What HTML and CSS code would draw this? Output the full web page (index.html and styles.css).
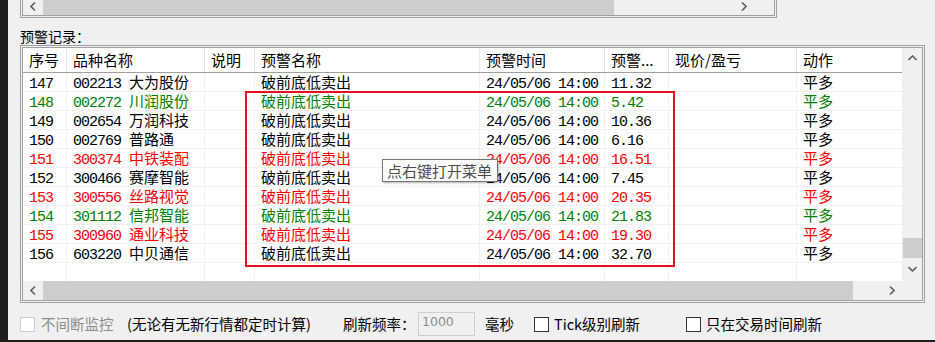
FILE: index.html
```html
<!DOCTYPE html>
<html lang="zh-CN">
<head>
<meta charset="utf-8">
<title>预警记录</title>
<link rel="stylesheet" href="styles.css">
</head>
<body>
<div class="window">
  <div class="topbox">
    <div class="hscroll top-h">
      <div class="sb-btn"><svg width="6" height="9" viewBox="0 0 6 9"><polyline points="5,0.5 1,4.5 5,8.5" class="chev"/></svg></div>
      <div class="thumb-h top-thumb"></div>
      <div class="sb-fill"></div>
      <div class="sb-btn"><svg width="6" height="9" viewBox="0 0 6 9"><polyline points="1,0.5 5,4.5 1,8.5" class="chev"/></svg></div>
    </div>
    <div class="corner"></div>
  </div>

  <div class="section-label">预警记录：</div>

  <div class="listbox">
    <div class="list">
      <div class="hdr">
        <div class="h c1">序号</div>
        <div class="h c2">品种名称</div>
        <div class="h c3">说明</div>
        <div class="h c4">预警名称</div>
        <div class="h c5">预警时间</div>
        <div class="h c6">预警...</div>
        <div class="h c7">现价/盈亏</div>
        <div class="h c8">动作</div>
      </div>

      <div class="row">
        <div class="c c1"><span class="n">147</span></div>
        <div class="c c2"><span class="n">002213 </span>大为股份</div>
        <div class="c c3"></div>
        <div class="c c4">破前底低卖出</div>
        <div class="c c5"><span class="n">24/05/06 14:00</span></div>
        <div class="c c6"><span class="n">11.32</span></div>
        <div class="c c7"></div>
        <div class="c c8">平多</div>
      </div>
      <div class="row green">
        <div class="c c1"><span class="n">148</span></div>
        <div class="c c2"><span class="n">002272 </span>川润股份</div>
        <div class="c c3"></div>
        <div class="c c4">破前底低卖出</div>
        <div class="c c5"><span class="n">24/05/06 14:00</span></div>
        <div class="c c6"><span class="n">5.42</span></div>
        <div class="c c7"></div>
        <div class="c c8">平多</div>
      </div>
      <div class="row">
        <div class="c c1"><span class="n">149</span></div>
        <div class="c c2"><span class="n">002654 </span>万润科技</div>
        <div class="c c3"></div>
        <div class="c c4">破前底低卖出</div>
        <div class="c c5"><span class="n">24/05/06 14:00</span></div>
        <div class="c c6"><span class="n">10.36</span></div>
        <div class="c c7"></div>
        <div class="c c8">平多</div>
      </div>
      <div class="row">
        <div class="c c1"><span class="n">150</span></div>
        <div class="c c2"><span class="n">002769 </span>普路通</div>
        <div class="c c3"></div>
        <div class="c c4">破前底低卖出</div>
        <div class="c c5"><span class="n">24/05/06 14:00</span></div>
        <div class="c c6"><span class="n">6.16</span></div>
        <div class="c c7"></div>
        <div class="c c8">平多</div>
      </div>
      <div class="row red">
        <div class="c c1"><span class="n">151</span></div>
        <div class="c c2"><span class="n">300374 </span>中铁装配</div>
        <div class="c c3"></div>
        <div class="c c4">破前底低卖出</div>
        <div class="c c5"><span class="n">24/05/06 14:00</span></div>
        <div class="c c6"><span class="n">16.51</span></div>
        <div class="c c7"></div>
        <div class="c c8">平多</div>
      </div>
      <div class="row">
        <div class="c c1"><span class="n">152</span></div>
        <div class="c c2"><span class="n">300466 </span>赛摩智能</div>
        <div class="c c3"></div>
        <div class="c c4">破前底低卖出</div>
        <div class="c c5"><span class="n">24/05/06 14:00</span></div>
        <div class="c c6"><span class="n">7.45</span></div>
        <div class="c c7"></div>
        <div class="c c8">平多</div>
      </div>
      <div class="row red">
        <div class="c c1"><span class="n">153</span></div>
        <div class="c c2"><span class="n">300556 </span>丝路视觉</div>
        <div class="c c3"></div>
        <div class="c c4">破前底低卖出</div>
        <div class="c c5"><span class="n">24/05/06 14:00</span></div>
        <div class="c c6"><span class="n">20.35</span></div>
        <div class="c c7"></div>
        <div class="c c8">平多</div>
      </div>
      <div class="row green">
        <div class="c c1"><span class="n">154</span></div>
        <div class="c c2"><span class="n">301112 </span>信邦智能</div>
        <div class="c c3"></div>
        <div class="c c4">破前底低卖出</div>
        <div class="c c5"><span class="n">24/05/06 14:00</span></div>
        <div class="c c6"><span class="n">21.83</span></div>
        <div class="c c7"></div>
        <div class="c c8">平多</div>
      </div>
      <div class="row red">
        <div class="c c1"><span class="n">155</span></div>
        <div class="c c2"><span class="n">300960 </span>通业科技</div>
        <div class="c c3"></div>
        <div class="c c4">破前底低卖出</div>
        <div class="c c5"><span class="n">24/05/06 14:00</span></div>
        <div class="c c6"><span class="n">19.30</span></div>
        <div class="c c7"></div>
        <div class="c c8">平多</div>
      </div>
      <div class="row">
        <div class="c c1"><span class="n">156</span></div>
        <div class="c c2"><span class="n">603220 </span>中贝通信</div>
        <div class="c c3"></div>
        <div class="c c4">破前底低卖出</div>
        <div class="c c5"><span class="n">24/05/06 14:00</span></div>
        <div class="c c6"><span class="n">32.70</span></div>
        <div class="c c7"></div>
        <div class="c c8">平多</div>
      </div>
      <div class="row empty">
        <div class="c c1"></div>
        <div class="c c2"></div>
        <div class="c c3"></div>
        <div class="c c4"></div>
        <div class="c c5"></div>
        <div class="c c6"></div>
        <div class="c c7"></div>
        <div class="c c8"></div>
      </div>
    </div>

    <div class="vscroll">
      <div class="sb-btn-v"><svg width="9" height="6" viewBox="0 0 9 6"><polyline points="0.5,5 4.5,1 8.5,5" class="chev"/></svg></div>
      <div class="v-space"></div>
      <div class="thumb-v"></div>
      <div class="sb-btn-v down"><svg width="9" height="6" viewBox="0 0 9 6"><polyline points="0.5,1 4.5,5 8.5,1" class="chev"/></svg></div>
    </div>

    <div class="hscroll main-h">
      <div class="sb-btn"><svg width="6" height="9" viewBox="0 0 6 9"><polyline points="5,0.5 1,4.5 5,8.5" class="chev"/></svg></div>
      <div class="thumb-h main-thumb"></div>
      <div class="sb-fill"></div>
      <div class="sb-btn"><svg width="6" height="9" viewBox="0 0 6 9"><polyline points="1,0.5 5,4.5 1,8.5" class="chev"/></svg></div>
    </div>
    <div class="corner"></div>

    <div class="highlight"></div>
    <div class="tooltip">点右键打开菜单</div>
  </div>

  <div class="controls">
    <span class="cb disabled"></span>
    <span class="lbl lbl-nonstop disabled-text">不间断监控</span>
    <span class="lbl lbl-note">(无论有无新行情都定时计算)</span>
    <span class="lbl lbl-freq">刷新频率：</span>
    <span class="num-input">1000</span>
    <span class="lbl lbl-ms">毫秒</span>
    <span class="cb"></span>
    <span class="lbl lbl-tick">Tick级别刷新</span>
    <span class="cb"></span>
    <span class="lbl lbl-trade">只在交易时间刷新</span>
  </div>
</div>
</body>
</html>
```

FILE: styles.css
```css
html, body {
  margin: 0;
  padding: 0;
}

body {
  width: 935px;
  height: 342px;
  background: #1e1e1e;
  overflow: hidden;
  font-family: "Noto Sans CJK SC", "Noto Sans", sans-serif;
  color: #000;
}

.window {
  margin-left: 8px;
  width: 927px;
  height: 340px;
  box-sizing: border-box;
  padding-left: 12px;
  background: #f0f0f0;
  overflow: hidden;
}

/* ---------- top (cut-off) list box ---------- */
.topbox {
  width: 757px;
  height: 18px;
  box-sizing: border-box;
  border: 3px double #a0a0a0;
  border-top: none;
  display: flex;
  overflow: hidden;
}

.top-h {
  width: 731px;
  height: 18px;
  margin-top: -3px;
  flex: none;
}

.topbox .corner {
  flex: 1;
}

.top-thumb {
  width: 571px;
}

/* ---------- scrollbars ---------- */
.hscroll {
  display: flex;
  align-items: stretch;
  background: #f0f0f0;
}

.sb-btn {
  width: 20px;
  flex: none;
  display: flex;
  align-items: center;
  justify-content: center;
}

.thumb-h {
  flex: none;
  background: #cdcdcd;
}

.sb-fill {
  flex: 1;
}

.chev {
  fill: none;
  stroke: #606060;
  stroke-width: 1.6;
}

.corner {
  background: #f0f0f0;
}

.vscroll {
  display: flex;
  flex-direction: column;
  background: #f0f0f0;
}

.sb-btn-v {
  height: 20px;
  flex: none;
  display: flex;
  align-items: center;
  justify-content: center;
}

.sb-btn-v.down {
  margin-top: 1px;
}

.v-space {
  height: 170px;
  flex: none;
}

.thumb-v {
  height: 20px;
  flex: none;
  margin-left: 1px;
  background: #cdcdcd;
}

/* ---------- label ---------- */
.section-label {
  height: 27px;
  box-sizing: border-box;
  padding-top: 9px;
  line-height: 18px;
  font-size: 14px;
}

/* ---------- main list box ---------- */
.listbox {
  position: relative;
  width: 905px;
  height: 258px;
  box-sizing: border-box;
  border: 3px double #a0a0a0;
  display: grid;
  grid-template-columns: 879px 20px;
  grid-template-rows: 233px 19px;
}

.list {
  background: #fff;
}

.hdr {
  display: flex;
  height: 25px;
  box-sizing: border-box;
  border-bottom: 1px solid #a0a0a0;
}

.h {
  box-sizing: border-box;
  border-right: 1px solid #e5e5e5;
  padding-left: 6px;
  font-size: 15px;
  line-height: 24px;
  white-space: nowrap;
}

.row {
  display: flex;
  height: 19px;
  box-sizing: border-box;
  border-bottom: 1px solid #f0f0f0;
}

.row.empty {
  height: 18px;
  border-bottom: none;
}

.c {
  box-sizing: border-box;
  border-right: 1px solid #f0f0f0;
  padding-left: 6px;
  font-size: 15px;
  line-height: 18px;
  white-space: nowrap;
}

.c1 { width: 44px; flex: none; }
.c2 { width: 138px; flex: none; }
.c3 { width: 50px; flex: none; }
.c4 { width: 225px; flex: none; }
.c5 { width: 125px; flex: none; }
.c6 { width: 64px; flex: none; }
.c7 { width: 128px; flex: none; }
.c8 { width: 105px; flex: none; border-right: none; }

.n {
  font-family: "Liberation Mono", "DejaVu Sans Mono", monospace;
  font-size: 15px;
  letter-spacing: -1px;
}

.row.green { color: #008000; }
.row.red { color: #ff0000; }

.main-h .main-thumb {
  width: 810px;
}

/* ---------- overlays ---------- */
.highlight {
  position: absolute;
  left: 222px;
  top: 43px;
  width: 430px;
  height: 176px;
  box-sizing: border-box;
  border: 2px solid #e81123;
  pointer-events: none;
}

.tooltip {
  position: absolute;
  left: 359px;
  top: 111px;
  width: 116px;
  height: 23px;
  box-sizing: border-box;
  border: 1px solid #767676;
  background: #fbfbfb;
  box-shadow: 1px 1px 2px rgba(0, 0, 0, 0.3);
  padding-left: 4px;
  font-size: 15px;
  line-height: 21px;
  color: #4d4d4d;
  white-space: nowrap;
}

/* ---------- bottom controls ---------- */
.controls {
  margin-top: 9px;
  height: 24px;
  display: flex;
  align-items: center;
  font-size: 14.5px;
  white-space: nowrap;
}

.cb {
  width: 15px;
  height: 15px;
  flex: none;
  box-sizing: border-box;
  border: 1px solid #333;
  background: #fff;
}

.cb.disabled {
  border-color: #cccccc;
}

.lbl {
  flex: none;
  line-height: 24px;
}

.disabled-text {
  color: #8c8c8c;
}

.lbl-nonstop { margin-left: 6px; width: 86px; }
.lbl-note { width: 216px; }
.lbl-freq { width: 75px; }
.lbl-ms { margin-left: 10px; width: 49px; }
.lbl-tick { margin-left: 5px; width: 132px; }
.lbl-trade { margin-left: 5px; }

.num-input {
  flex: none;
  width: 57px;
  height: 24px;
  box-sizing: border-box;
  border: 1px solid #cfcfcf;
  background: #f0f0f0;
  color: #8c8c8c;
  font-family: "DejaVu Sans", sans-serif;
  font-size: 12.5px;
  line-height: 18px;
  padding-left: 3px;
}
```
